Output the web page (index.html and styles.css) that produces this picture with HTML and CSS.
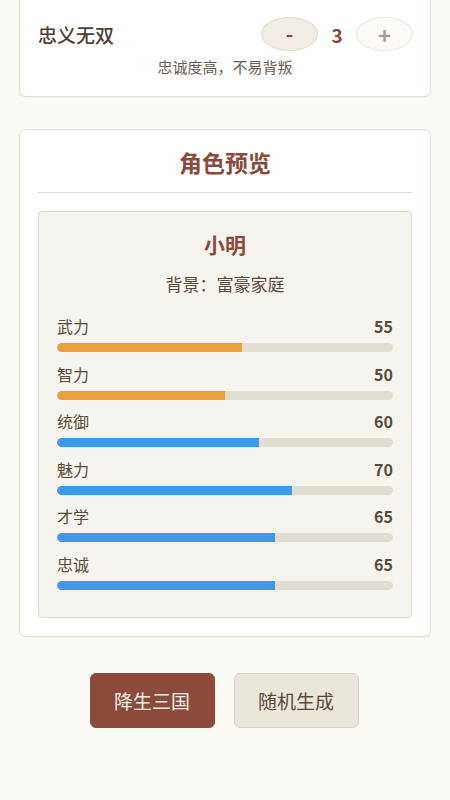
FILE: index.html
```html
<!DOCTYPE html>
<html lang="zh">
<head>
<meta charset="utf-8">
<link rel="stylesheet" href="styles.css">
</head>
<body>
<div class="page">
  <section class="card trait-card">
    <div class="trait-row">
      <span class="trait-name">忠义无双</span>
      <div class="stepper">
        <button class="step minus">-</button>
        <span class="step-val">3</span>
        <button class="step plus">+</button>
      </div>
    </div>
    <p class="trait-desc">忠诚度高，不易背叛</p>
  </section>

  <section class="card preview-card">
    <h2 class="preview-title">角色预览</h2>
    <div class="divider"></div>
    <div class="char-box">
      <div class="char-name">小明</div>
      <div class="char-bg">背景：富豪家庭</div>
      <div class="stats">
        <div class="stat">
          <div class="stat-head"><span>武力</span><span class="num">55</span></div>
          <div class="track"><div class="fill orange" style="width:55%"></div></div>
        </div>
        <div class="stat">
          <div class="stat-head"><span>智力</span><span class="num">50</span></div>
          <div class="track"><div class="fill orange" style="width:50%"></div></div>
        </div>
        <div class="stat">
          <div class="stat-head"><span>统御</span><span class="num">60</span></div>
          <div class="track"><div class="fill blue" style="width:60%"></div></div>
        </div>
        <div class="stat">
          <div class="stat-head"><span>魅力</span><span class="num">70</span></div>
          <div class="track"><div class="fill blue" style="width:70%"></div></div>
        </div>
        <div class="stat">
          <div class="stat-head"><span>才学</span><span class="num">65</span></div>
          <div class="track"><div class="fill blue" style="width:65%"></div></div>
        </div>
        <div class="stat">
          <div class="stat-head"><span>忠诚</span><span class="num">65</span></div>
          <div class="track"><div class="fill blue" style="width:65%"></div></div>
        </div>
      </div>
    </div>
  </section>

  <div class="actions">
    <button class="btn primary">降生三国</button>
    <button class="btn secondary">随机生成</button>
  </div>
</div>
</body>
</html>
```

FILE: styles.css
```css
* { box-sizing: border-box; }
html, body {
  margin: 0;
  padding: 0;
  background: #fbfaf4;
  font-family: "Noto Sans CJK SC", "Noto Sans", sans-serif;
  color: #5a4a3a;
  height: 800px;
  overflow: hidden;
}
.page {
  padding: 0 19px;
  margin-top: -20px;
}
.card {
  background: #fff;
  border: 1px solid #e2ded4;
  border-radius: 7px;
  box-shadow: 0 1px 2px rgba(0,0,0,0.04);
}
.trait-card {
  padding: 36px 18px 19px;
}
.trait-row {
  display: flex;
  align-items: center;
  justify-content: space-between;
  height: 34px;
}
.trait-name {
  font-size: 19px;
  font-weight: 500;
  color: #4e4034;
}
.stepper {
  display: flex;
  align-items: center;
  margin-right: -1px;
}
.step {
  width: 57px;
  height: 34px;
  border-radius: 50%;
  font-family: "Noto Sans CJK SC", sans-serif;
  font-size: 20px;
  font-weight: 700;
  line-height: 1;
  padding: 0;
  display: flex;
  align-items: center;
  justify-content: center;
}
.minus {
  background: #f1ede4;
  border: 1px solid #e1dccf;
  color: #8b4a3a;
}
.plus {
  background: #fcfbf7;
  border: 1px solid #ebe7dd;
  color: #a39c8c;
  font-size: 22px;
}
.step-val {
  width: 38px;
  text-align: center;
  font-size: 19px;
  font-weight: 700;
  color: #8b4a3a;
}
.trait-desc {
  margin: 6px 0 0;
  text-align: center;
  font-size: 15px;
  line-height: 20px;
  color: #6b5e50;
}
.preview-card {
  margin-top: 32px;
  padding: 17px 18px 18px;
}
.preview-title {
  margin: 0;
  text-align: center;
  font-size: 23px;
  line-height: 30px;
  font-weight: 700;
  color: #8b4a3a;
}
.divider {
  height: 1px;
  background: #d9d6cf;
  margin: 15px 0 18px;
}
.char-box {
  background: #f6f4ee;
  border: 1px solid #dedacd;
  border-radius: 4px;
  padding: 18px 18px 27px;
}
.char-name {
  text-align: center;
  font-size: 21px;
  line-height: 28px;
  font-weight: 700;
  color: #8b4a3a;
}
.char-bg {
  margin-top: 15px;
  text-align: center;
  font-size: 17px;
  line-height: 22px;
  color: #5a4a3a;
}
.stats {
  margin-top: 20px;
  display: flex;
  flex-direction: column;
  gap: 10.5px;
}
.stat-head {
  display: flex;
  justify-content: space-between;
  align-items: center;
  font-size: 16px;
  line-height: 22px;
  color: #5a4a3a;
}
.num {
  font-weight: 700;
  font-size: 16px;
  color: #574b40;
}
.track {
  margin-top: 6px;
  height: 9px;
  border-radius: 5px;
  background: #e1ddd0;
  overflow: hidden;
}
.fill {
  height: 100%;
  border-radius: 5px 0 0 5px;
}
.orange { background: #e8a13b; }
.blue { background: #3b9af0; }
.actions {
  margin-top: 36px;
  display: flex;
  justify-content: center;
  gap: 19px;
  padding-right: 2px;
}
.btn {
  width: 125px;
  height: 55px;
  border-radius: 6px;
  font-family: "Noto Sans CJK SC", sans-serif;
  font-size: 19px;
  padding: 0;
}
.primary {
  background: #8c4a39;
  border: 1px solid #8c4a39;
  color: #f7efe6;
}
.secondary {
  background: #ebe6da;
  border: 1px solid #d9d3c3;
  color: #5a4a3a;
}
```
